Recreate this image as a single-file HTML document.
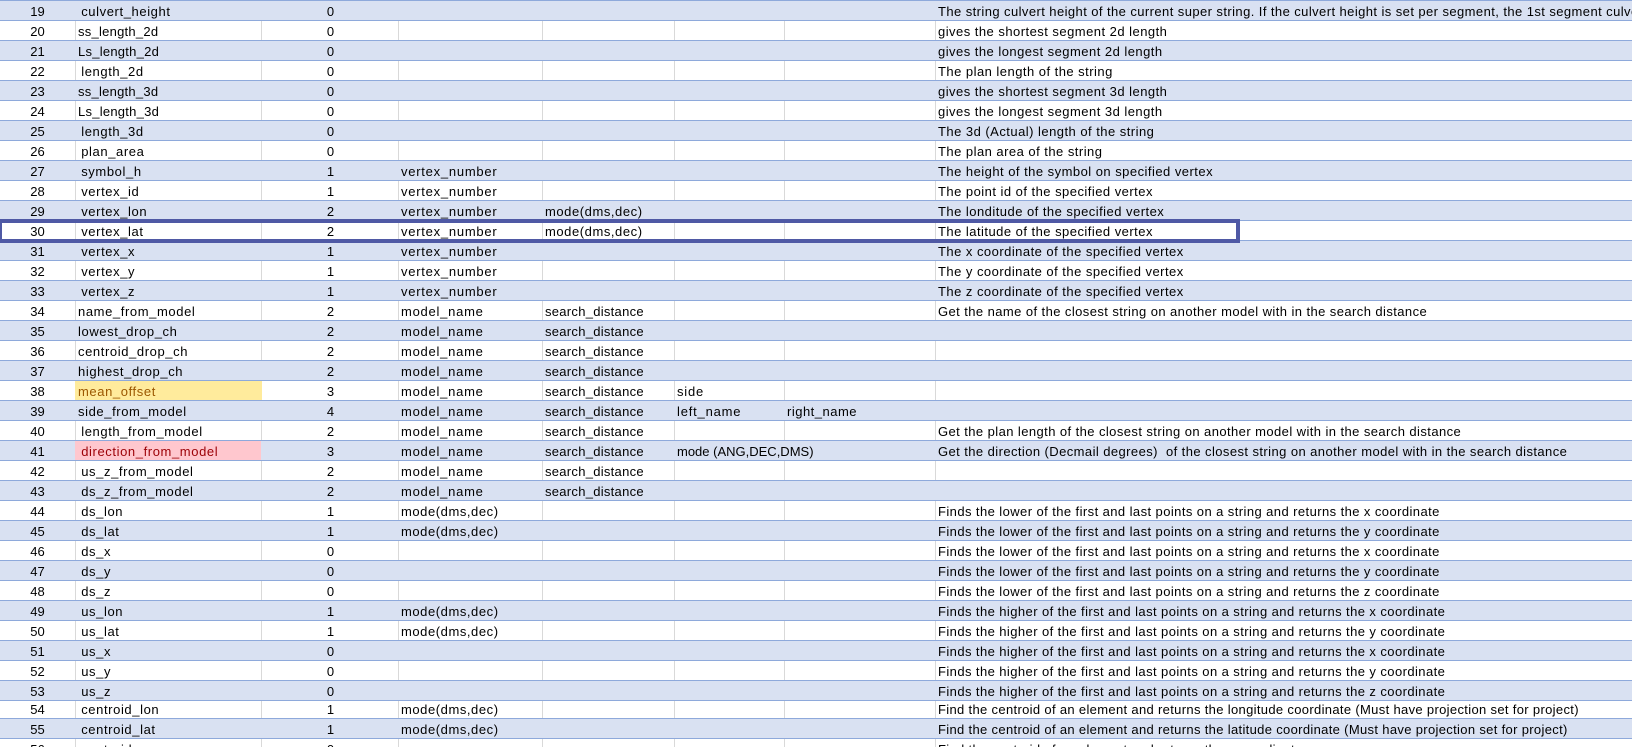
<!DOCTYPE html>
<html><head><meta charset="utf-8"><style>
html,body{margin:0;padding:0;background:#fff}
#s{position:relative;width:1632px;height:747px;overflow:hidden;box-sizing:border-box;padding-top:1px;font:13px/19px "Liberation Sans",sans-serif;color:#000}
.r{position:relative;height:20px;box-sizing:border-box;border-bottom:1px solid #8EA9DB;white-space:pre}
.r.b{background:#D9E1F2}
.r.w{background:linear-gradient(#D9D9D9,#D9D9D9) 75px 0/1px 100% no-repeat,linear-gradient(#D9D9D9,#D9D9D9) 261px 0/1px 100% no-repeat,linear-gradient(#D9D9D9,#D9D9D9) 398px 0/1px 100% no-repeat,linear-gradient(#D9D9D9,#D9D9D9) 542px 0/1px 100% no-repeat,linear-gradient(#D9D9D9,#D9D9D9) 674px 0/1px 100% no-repeat,linear-gradient(#D9D9D9,#D9D9D9) 784px 0/1px 100% no-repeat,linear-gradient(#D9D9D9,#D9D9D9) 935px 0/1px 100% no-repeat,#fff}
.r span{position:absolute;top:1px}
.a{left:0;width:75px;text-align:center}
.n{left:78px;letter-spacing:.6px;word-spacing:-1px}
.n.q{letter-spacing:.25px}
.c{left:262px;width:137px;text-align:center}
.d{left:401px;letter-spacing:.75px}
.d.m,.e.m{letter-spacing:.56px}
.e{left:545px;letter-spacing:.28px}
.f{left:677px;letter-spacing:.8px}
.f.z{letter-spacing:0}
.g{left:787px;letter-spacing:.5px}
.h{left:938px;letter-spacing:.47px}
.h.l{letter-spacing:.42px}
.h.k{letter-spacing:.33px}
.r .y{left:75px;top:0;width:187px;height:19px;background:#FFEB9C}
.r .p{left:75px;top:0;width:186px;height:19px;background:#FFC7CE}
#t{position:absolute;left:0;top:0;width:1632px;height:1px;background:#8EA9DB}
#x{position:absolute;left:-2px;top:219px;width:1242px;height:24px;box-sizing:border-box;border:4px solid #4F59A5}
</style></head><body><div id="s">
<div class="r b"><span class="a">19</span><span class="n"> culvert_height</span><span class="c">0</span><span class="h l">The string culvert height of the current super string. If the culvert height is set per segment, the 1st segment culvert height is returned</span></div>
<div class="r w"><span class="a">20</span><span class="n q">ss_length_2d</span><span class="c">0</span><span class="h">gives the shortest segment 2d length</span></div>
<div class="r b"><span class="a">21</span><span class="n q">Ls_length_2d</span><span class="c">0</span><span class="h">gives the longest segment 2d length</span></div>
<div class="r w"><span class="a">22</span><span class="n"> length_2d</span><span class="c">0</span><span class="h">The plan length of the string</span></div>
<div class="r b"><span class="a">23</span><span class="n q">ss_length_3d</span><span class="c">0</span><span class="h">gives the shortest segment 3d length</span></div>
<div class="r w"><span class="a">24</span><span class="n q">Ls_length_3d</span><span class="c">0</span><span class="h">gives the longest segment 3d length</span></div>
<div class="r b"><span class="a">25</span><span class="n"> length_3d</span><span class="c">0</span><span class="h">The 3d (Actual) length of the string</span></div>
<div class="r w"><span class="a">26</span><span class="n"> plan_area</span><span class="c">0</span><span class="h">The plan area of the string</span></div>
<div class="r b"><span class="a">27</span><span class="n"> symbol_h</span><span class="c">1</span><span class="d">vertex_number</span><span class="h">The height of the symbol on specified vertex</span></div>
<div class="r w"><span class="a">28</span><span class="n"> vertex_id</span><span class="c">1</span><span class="d">vertex_number</span><span class="h">The point id of the specified vertex</span></div>
<div class="r b"><span class="a">29</span><span class="n"> vertex_lon</span><span class="c">2</span><span class="d">vertex_number</span><span class="e m">mode(dms,dec)</span><span class="h">The londitude of the specified vertex</span></div>
<div class="r w"><span class="a">30</span><span class="n"> vertex_lat</span><span class="c">2</span><span class="d">vertex_number</span><span class="e m">mode(dms,dec)</span><span class="h">The latitude of the specified vertex</span></div>
<div class="r b"><span class="a">31</span><span class="n"> vertex_x</span><span class="c">1</span><span class="d">vertex_number</span><span class="h">The x coordinate of the specified vertex</span></div>
<div class="r w"><span class="a">32</span><span class="n"> vertex_y</span><span class="c">1</span><span class="d">vertex_number</span><span class="h">The y coordinate of the specified vertex</span></div>
<div class="r b"><span class="a">33</span><span class="n"> vertex_z</span><span class="c">1</span><span class="d">vertex_number</span><span class="h">The z coordinate of the specified vertex</span></div>
<div class="r w"><span class="a">34</span><span class="n">name_from_model</span><span class="c">2</span><span class="d">model_name</span><span class="e">search_distance</span><span class="h l">Get the name of the closest string on another model with in the search distance</span></div>
<div class="r b"><span class="a">35</span><span class="n">lowest_drop_ch</span><span class="c">2</span><span class="d">model_name</span><span class="e">search_distance</span></div>
<div class="r w"><span class="a">36</span><span class="n">centroid_drop_ch</span><span class="c">2</span><span class="d">model_name</span><span class="e">search_distance</span></div>
<div class="r b"><span class="a">37</span><span class="n">highest_drop_ch</span><span class="c">2</span><span class="d">model_name</span><span class="e">search_distance</span></div>
<div class="r w"><span class="a">38</span><span class="y"></span><span class="n" style="color:#9C5700">mean_offset</span><span class="c">3</span><span class="d">model_name</span><span class="e">search_distance</span><span class="f">side</span></div>
<div class="r b"><span class="a">39</span><span class="n">side_from_model</span><span class="c">4</span><span class="d">model_name</span><span class="e">search_distance</span><span class="f">left_name</span><span class="g">right_name</span></div>
<div class="r w"><span class="a">40</span><span class="n"> length_from_model</span><span class="c">2</span><span class="d">model_name</span><span class="e">search_distance</span><span class="h l">Get the plan length of the closest string on another model with in the search distance</span></div>
<div class="r b"><span class="a">41</span><span class="p"></span><span class="n" style="color:#9C0006"> direction_from_model</span><span class="c">3</span><span class="d">model_name</span><span class="e">search_distance</span><span class="f z">mode (ANG,DEC,DMS)</span><span class="h l">Get the direction (Decmail degrees)  of the closest string on another model with in the search distance</span></div>
<div class="r w"><span class="a">42</span><span class="n"> us_z_from_model</span><span class="c">2</span><span class="d">model_name</span><span class="e">search_distance</span></div>
<div class="r b"><span class="a">43</span><span class="n"> ds_z_from_model</span><span class="c">2</span><span class="d">model_name</span><span class="e">search_distance</span></div>
<div class="r w"><span class="a">44</span><span class="n"> ds_lon</span><span class="c">1</span><span class="d m">mode(dms,dec)</span><span class="h l">Finds the lower of the first and last points on a string and returns the x coordinate</span></div>
<div class="r b"><span class="a">45</span><span class="n"> ds_lat</span><span class="c">1</span><span class="d m">mode(dms,dec)</span><span class="h l">Finds the lower of the first and last points on a string and returns the y coordinate</span></div>
<div class="r w"><span class="a">46</span><span class="n"> ds_x</span><span class="c">0</span><span class="h l">Finds the lower of the first and last points on a string and returns the x coordinate</span></div>
<div class="r b"><span class="a">47</span><span class="n"> ds_y</span><span class="c">0</span><span class="h l">Finds the lower of the first and last points on a string and returns the y coordinate</span></div>
<div class="r w"><span class="a">48</span><span class="n"> ds_z</span><span class="c">0</span><span class="h l">Finds the lower of the first and last points on a string and returns the z coordinate</span></div>
<div class="r b"><span class="a">49</span><span class="n"> us_lon</span><span class="c">1</span><span class="d m">mode(dms,dec)</span><span class="h l">Finds the higher of the first and last points on a string and returns the x coordinate</span></div>
<div class="r w"><span class="a">50</span><span class="n"> us_lat</span><span class="c">1</span><span class="d m">mode(dms,dec)</span><span class="h l">Finds the higher of the first and last points on a string and returns the y coordinate</span></div>
<div class="r b"><span class="a">51</span><span class="n"> us_x</span><span class="c">0</span><span class="h l">Finds the higher of the first and last points on a string and returns the x coordinate</span></div>
<div class="r w"><span class="a">52</span><span class="n"> us_y</span><span class="c">0</span><span class="h l">Finds the higher of the first and last points on a string and returns the y coordinate</span></div>
<div class="r b"><span class="a">53</span><span class="n"> us_z</span><span class="c">0</span><span class="h l">Finds the higher of the first and last points on a string and returns the z coordinate</span></div>
<div class="r w" style="height:18px"><span class="a" style="top:-1px">54</span><span class="n" style="top:-1px"> centroid_lon</span><span class="c" style="top:-1px">1</span><span class="d m" style="top:-1px">mode(dms,dec)</span><span class="h k" style="top:-1px">Find the centroid of an element and returns the longitude coordinate (Must have projection set for project)</span></div>
<div class="r b"><span class="a">55</span><span class="n"> centroid_lat</span><span class="c">1</span><span class="d m">mode(dms,dec)</span><span class="h k">Find the centroid of an element and returns the latitude coordinate (Must have projection set for project)</span></div>
<div class="r w"><span class="a">56</span><span class="n"> centroid_x</span><span class="c">0</span><span class="h k">Find the centroid of an element and returns the x coordinate</span></div>
<div id="t"></div><div id="x"></div>
</div></body></html>
